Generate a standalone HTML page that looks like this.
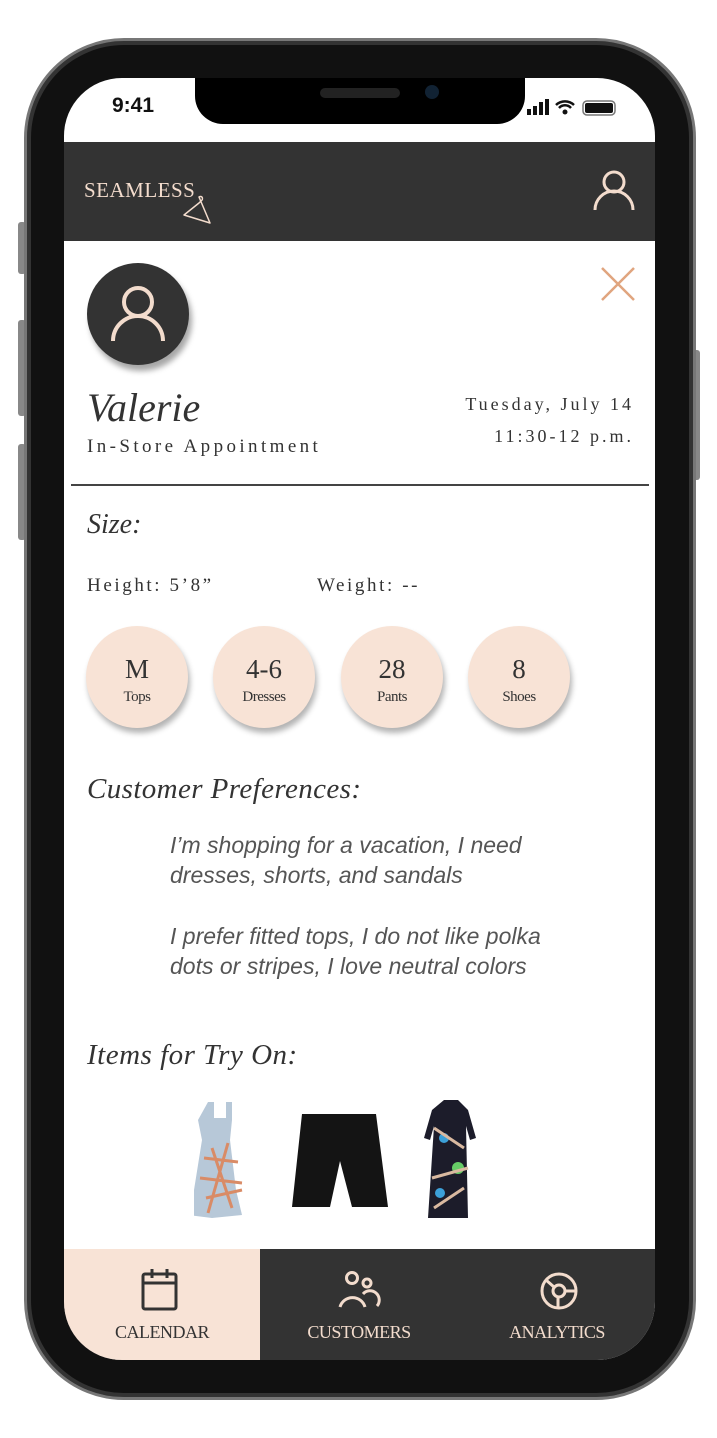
<!DOCTYPE html>
<html><head><meta charset="utf-8"><style>
*{margin:0;padding:0;box-sizing:border-box}
body{width:717px;height:1438px;background:#fff;position:relative;overflow:hidden;font-family:"Liberation Serif",serif;color:#333}
.a{position:absolute}
.it{font-style:italic}
.c{position:absolute;width:102px;height:102px;border-radius:50%;background:#f8e3d6;box-shadow:2px 5px 6px rgba(0,0,0,.3);text-align:center}
.c b{display:block;font-weight:normal;font-size:27px;margin-top:28px;color:#333}
.c i{display:block;font-style:normal;font-size:15px;margin-top:4px;color:#333;letter-spacing:-0.5px}
.pref{font-family:"Liberation Sans",sans-serif;font-style:italic;font-size:23px;color:#555;line-height:30px;font-weight:300}
</style></head><body>
<div class="a" style="left:18px;top:222px;width:8px;height:52px;background:#888;border-radius:3px"></div>
<div class="a" style="left:18px;top:320px;width:8px;height:96px;background:#888;border-radius:3px"></div>
<div class="a" style="left:18px;top:444px;width:8px;height:96px;background:#888;border-radius:3px"></div>
<div class="a" style="left:692px;top:350px;width:8px;height:130px;background:#888;border-radius:3px"></div>
<div class="a" style="left:24px;top:38px;width:672px;height:1362px;border-radius:100px;background:#111;border:3px solid #777;box-shadow:inset 0 0 0 4px #333"></div>
<div class="a" style="left:64px;top:78px;width:591px;height:1282px;border-radius:58px;background:#fff;overflow:hidden">
  <div class="a" style="left:131px;top:-2px;width:330px;height:48px;background:#000;border-radius:0 0 28px 28px"></div>
  <div class="a" style="left:256px;top:10px;width:80px;height:10px;background:#222;border-radius:5px"></div>
  <div class="a" style="left:361px;top:7px;width:14px;height:14px;background:#123;border-radius:50%"></div>
  <div class="a" style="left:48px;top:16px;font-family:'Liberation Sans',sans-serif;font-weight:bold;font-size:21px;color:#111">9:41</div>
  <svg class="a" style="left:463px;top:20px" width="110" height="20"><rect x="0" y="11" width="4" height="6" fill="#111"/><rect x="6" y="8" width="4" height="9" fill="#111"/><rect x="12" y="4" width="4" height="13" fill="#111"/><rect x="18" y="1" width="4" height="16" fill="#111"/><path d="M29 7a13 13 0 0 1 18 0M32 10a8 8 0 0 1 12 0" stroke="#111" stroke-width="2.5" fill="none"/><circle cx="38" cy="14" r="2.5" fill="#111"/><rect x="56" y="3" width="32" height="14" rx="4" fill="none" stroke="#777" stroke-width="1.5"/><rect x="58" y="5" width="28" height="10" rx="2" fill="#111"/></svg>
  <div class="a" style="left:0;top:64px;width:591px;height:99px;background:#333"></div>
  <div class="a" style="left:20px;top:100px;font-size:21px;color:#f3dccd;letter-spacing:0.5px">SEAMLESS</div>
  <svg class="a" style="left:118px;top:116px" width="34" height="30"><path d="M17 3c3-2 5 2 2 4l-2 2L2 21l26 8z" stroke="#f3dccd" stroke-width="1.5" fill="none" stroke-linejoin="round"/></svg>
  <svg class="a" style="left:528px;top:90px" width="44" height="44"><circle cx="22" cy="14" r="10" stroke="#f3dccd" stroke-width="3" fill="none"/><path d="M3 42a19 19 0 0 1 38 0" stroke="#f3dccd" stroke-width="3" fill="none"/></svg>
  <div class="a" style="left:23px;top:185px;width:102px;height:102px;border-radius:50%;background:#333;box-shadow:3px 6px 6px rgba(0,0,0,.35)"></div>
  <svg class="a" style="left:44px;top:207px" width="60" height="60"><circle cx="30" cy="17" r="14" stroke="#f3dccd" stroke-width="4" fill="none"/><path d="M5 56a25 25 0 0 1 50 0" stroke="#f3dccd" stroke-width="4" fill="none"/></svg>
  <svg class="a" style="left:536px;top:188px" width="36" height="36"><path d="M2 2l32 32M34 2L2 34" stroke="#e0a57f" stroke-width="2.5"/></svg>
  <div class="a it" style="left:23px;top:306px;font-size:40px;color:#333">Valerie</div>
  <div class="a" style="left:23px;top:358px;font-size:19px;letter-spacing:3.4px">In-Store Appointment</div>
  <div class="a" style="right:21px;top:316px;font-size:18px;letter-spacing:3px">Tuesday, July 14</div>
  <div class="a" style="right:21px;top:348px;font-size:18px;letter-spacing:3px">11:30-12 p.m.</div>
  <div class="a" style="left:7px;top:406px;width:578px;height:2px;background:#444"></div>
  <div class="a it" style="left:23px;top:431px;font-size:28px">Size:</div>
  <div class="a" style="left:23px;top:497px;font-size:19px;letter-spacing:2.6px">Height: 5’8”</div>
  <div class="a" style="left:253px;top:497px;font-size:19px;letter-spacing:2.6px">Weight: --</div>
  <div class="c" style="left:22px;top:548px"><b>M</b><i>Tops</i></div>
  <div class="c" style="left:149px;top:548px"><b>4-6</b><i>Dresses</i></div>
  <div class="c" style="left:277px;top:548px"><b>28</b><i>Pants</i></div>
  <div class="c" style="left:404px;top:548px"><b>8</b><i>Shoes</i></div>
  <div class="a it" style="left:23px;top:695px;font-size:29px;letter-spacing:0.4px">Customer Preferences:</div>
  <div class="a pref" style="left:106px;top:752px">I’m shopping for a vacation, I need<br>dresses, shorts, and sandals</div>
  <div class="a pref" style="left:106px;top:843px">I prefer fitted tops, I do not like polka<br>dots or stripes, I love neutral colors</div>
  <div class="a it" style="left:23px;top:961px;font-size:29px;letter-spacing:0.5px">Items for Try On:</div>
  <svg class="a" style="left:130px;top:1020px" width="60" height="125"><path d="M14 4h6v16h12V4h6v18l-2 20 6 50 6 25-30 3-24-3 6-25 8-50-4-20z" fill="#b7c8d8"/><path d="M6 80l42 5M10 60l34 4M12 100l36-8M18 50l20 60M34 45L14 115" stroke="#d98b66" stroke-width="3" fill="none"/></svg>
  <svg class="a" style="left:228px;top:1033px" width="96" height="100"><path d="M10 3h74l12 93H60L48 50 38 96H0z" fill="#141414"/></svg>
  <svg class="a" style="left:360px;top:1020px" width="56" height="125"><path d="M20 2h14l10 10 8 28-6 2-4-14 2 92H4l6-92-4 14-6-2 8-28z" fill="#1c1c2a"/><circle cx="20" cy="40" r="5" fill="#3ca0d8"/><circle cx="34" cy="70" r="6" fill="#6c6"/><circle cx="16" cy="95" r="5" fill="#3ca0d8"/><path d="M10 30l30 20M8 80l36-10M10 110l30-20" stroke="#d9b9a0" stroke-width="3"/></svg>
  <div class="a" style="left:0;top:1171px;width:591px;height:111px;background:#333"></div>
  <div class="a" style="left:0;top:1171px;width:196px;height:111px;background:#f8e3d6"></div>
  <svg class="a" style="left:77px;top:1190px" width="40" height="44"><rect x="2" y="6" width="33" height="35" rx="2" stroke="#333" stroke-width="3" fill="none"/><path d="M2 15h33M11 1v9M26 1v9" stroke="#333" stroke-width="3"/></svg>
  <svg class="a" style="left:273px;top:1192px" width="44" height="40"><circle cx="15" cy="8" r="5.5" stroke="#f3dccd" stroke-width="3" fill="none"/><circle cx="30" cy="13" r="4" stroke="#f3dccd" stroke-width="3" fill="none"/><path d="M3 37a13 13 0 0 1 25 0M26 24a9 9 0 0 1 14 12" stroke="#f3dccd" stroke-width="3" fill="none"/></svg>
  <svg class="a" style="left:474px;top:1192px" width="42" height="42"><circle cx="21" cy="21" r="17" stroke="#f3dccd" stroke-width="3" fill="none"/><circle cx="21" cy="21" r="6" stroke="#f3dccd" stroke-width="3" fill="none"/><path d="M8 10l8 7M27 21h11M20 27v11" stroke="#f3dccd" stroke-width="3"/></svg>
  <div class="a" style="left:0;width:196px;top:1244px;text-align:center;font-size:18px;color:#333;letter-spacing:-0.5px">CALENDAR</div>
  <div class="a" style="left:196px;width:198px;top:1244px;text-align:center;font-size:18px;color:#f3dccd;letter-spacing:-0.5px">CUSTOMERS</div>
  <div class="a" style="left:394px;width:198px;top:1244px;text-align:center;font-size:18px;color:#f3dccd;letter-spacing:-0.5px">ANALYTICS</div>
</div>
</body></html>
